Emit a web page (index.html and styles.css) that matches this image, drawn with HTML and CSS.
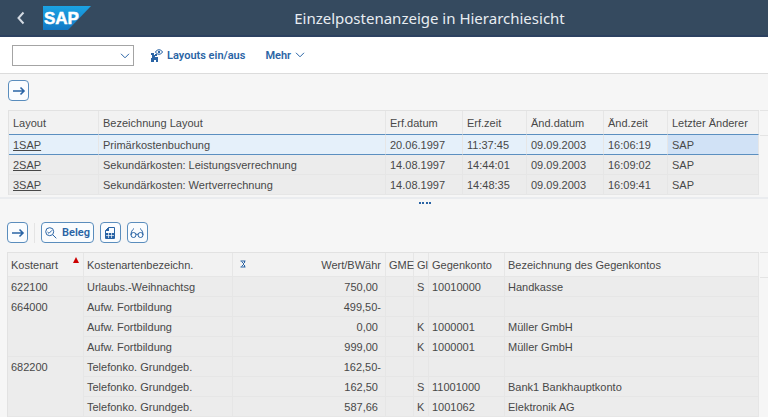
FILE: index.html
```html
<!DOCTYPE html>
<html lang="de">
<head>
  <meta charset="UTF-8">
  <meta name="viewport" content="width=device-width, initial-scale=1.0">
  <title>Einzelpostenanzeige in Hierarchiesicht</title>
  <link rel="stylesheet" href="styles.css">
</head>
<body>
  <header class="shell">
    <button class="back" aria-label="Zurück">
      <svg width="8" height="14" viewBox="0 0 8 14"><path d="M6.500 1.500L1.500 7l5 5.500"/></svg>
    </button>
    <svg class="logo" width="48" height="24" viewBox="0 0 48 24" role="img" aria-label="SAP">
      <defs>
        <linearGradient id="sap" x1="0" y1="0" x2="0" y2="1">
          <stop offset="0" stop-color="#1ba3e4"/>
          <stop offset="1" stop-color="#1278c4"/>
        </linearGradient>
      </defs>
      <path d="M0 0h48L25 24H0z" fill="url(#sap)" stroke="none"/>
      <text x="1" y="18">SAP</text>
    </svg>
    <h1>Einzelpostenanzeige in Hierarchiesicht</h1>
  </header>

  <nav class="toolbar">
    <div class="select-box">
      <select aria-label="Befehl"><option></option></select>
      <svg class="chevron" width="10" height="6" viewBox="0 0 10 6"><path d="M1 .8l4 4 4-4"/></svg>
    </div>
    <button class="btn-text">
      <svg width="13" height="13" viewBox="0 0 13 13">
        <path class="fill" d="M1 4h3v2h1v2h3v5H6v-2H4v2H1V9h1V6H1z"/>
        <path class="fill" d="M5 5h2v2H5z"/>
        <path d="M5.500 3c1.500-3 5.500-3 7 0-1.500 3-5.500 3-7 0z"/>
        <circle class="fill" cx="9" cy="3" r="1.200"/>
      </svg>
      Layouts ein/aus
    </button>
    <button class="btn-text">
      Mehr
      <svg class="chevron" width="10" height="6" viewBox="0 0 10 6"><path d="M1 .8l4 4 4-4"/></svg>
    </button>
  </nav>

  <main>
    <section class="panel">
      <div class="actions">
        <button class="btn" aria-label="Weiter">
          <svg width="14" height="12" viewBox="0 0 14 12"><path class="thick" d="M1 6h11M8.500 2.500L12 6 8.500 9.500"/></svg>
        </button>
      </div>
      <div class="grid-wrap">
        <table class="grid layouts">
          <colgroup>
            <col class="w-layout"><col><col class="w-date"><col class="w-time"><col class="w-date"><col class="w-time"><col class="w-user">
          </colgroup>
          <thead>
            <tr><th>Layout</th><th>Bezeichnung Layout</th><th>Erf.datum</th><th>Erf.zeit</th><th>Änd.datum</th><th>Änd.zeit</th><th>Letzter Änderer</th></tr>
          </thead>
          <tbody>
            <tr class="selected"><td><a href="#">1SAP</a></td><td>Primärkostenbuchung</td><td>20.06.1997</td><td>11:37:45</td><td>09.09.2003</td><td>16:06:19</td><td class="current">SAP</td></tr>
            <tr><td><a href="#">2SAP</a></td><td>Sekundärkosten: Leistungsverrechnung</td><td>14.08.1997</td><td>14:44:01</td><td>09.09.2003</td><td>16:09:02</td><td>SAP</td></tr>
            <tr><td><a href="#">3SAP</a></td><td>Sekundärkosten: Wertverrechnung</td><td>14.08.1997</td><td>14:48:35</td><td>09.09.2003</td><td>16:09:41</td><td>SAP</td></tr>
          </tbody>
        </table>
        <div class="rail"></div>
      </div>
    </section>

    <div class="splitter"><svg width="14" height="4" viewBox="0 0 14 4"><path d="M1 1h2v2H1zM4 1h2v2H4zM8 1h2v2H8zM11 1h2v2h-2z"/></svg></div>

    <section class="panel panel-items">
      <div class="actions">
        <button class="btn" aria-label="Weiter">
          <svg width="14" height="12" viewBox="0 0 14 12"><path class="thick" d="M1 6h11M8.500 2.500L12 6 8.500 9.500"/></svg>
        </button>
        <span class="divider"></span>
        <button class="btn btn-label">
          <svg width="12" height="12" viewBox="0 0 12 12"><circle cx="4.700" cy="4.700" r="4"/><path d="M7.700 7.700l3.600 3.600M2.500 5l1.500 1.300 3-3"/></svg>
          Beleg
        </button>
        <button class="btn" aria-label="Layout">
          <svg width="12" height="14" viewBox="0 0 12 14"><path d="M4.500 1.500h6v11h-9v-8z"/><path class="fill" d="M1 5l4-4v4zM2 7h8v5H2z"/><path class="lines" d="M2 9.500h8M4.500 7v5M7.500 7v5"/></svg>
        </button>
        <button class="btn" aria-label="Anzeigen">
          <svg width="14" height="12" viewBox="0 0 14 12"><circle cx="3.500" cy="8" r="2.500"/><circle cx="10.500" cy="8" r="2.500"/><path d="M1 8c0-3 1-5 3-6.500M13 8c0-3-1-5-3-6.500M6 7.500q1-1 2 0"/></svg>
        </button>
      </div>
      <div class="grid-wrap">
        <table class="grid items">
          <colgroup>
            <col class="w-cost"><col class="w-name"><col class="w-value"><col class="w-unit"><col class="w-kind"><col class="w-account"><col>
          </colgroup>
          <thead>
            <tr>
              <th><div class="head">Kostenart <svg class="sort" width="6" height="6" viewBox="0 0 6 6"><path d="M3 0l3 6H0z"/></svg></div></th>
              <th>Kostenartenbezeichn.</th>
              <th><div class="head"><svg class="sum" width="6" height="8" viewBox="0 0 6 8"><path d="M.5 1h5M.5 7h5M1.500 1.500L4 4 1.500 6.500M4.500 1v2M4.500 5v2"/></svg> Wert/BWähr</div></th>
              <th>GME</th><th>Gl</th><th>Gegenkonto</th><th>Bezeichnung des Gegenkontos</th>
            </tr>
          </thead>
          <tbody>
            <tr><td>622100</td><td>Urlaubs.-Weihnachtsg</td><td class="num">750,00&nbsp;</td><td></td><td>S</td><td>10010000</td><td>Handkasse</td></tr>
            <tr><td rowspan="3" class="group">664000</td><td>Aufw. Fortbildung</td><td class="num">499,50-</td><td></td><td></td><td></td><td></td></tr>
            <tr><td>Aufw. Fortbildung</td><td class="num">0,00&nbsp;</td><td></td><td>K</td><td>1000001</td><td>Müller GmbH</td></tr>
            <tr><td>Aufw. Fortbildung</td><td class="num">999,00&nbsp;</td><td></td><td>K</td><td>1000001</td><td>Müller GmbH</td></tr>
            <tr><td rowspan="3" class="group">682200</td><td>Telefonko. Grundgeb.</td><td class="num">162,50-</td><td></td><td></td><td></td><td></td></tr>
            <tr><td>Telefonko. Grundgeb.</td><td class="num">162,50&nbsp;</td><td></td><td>S</td><td>11001000</td><td>Bank1 Bankhauptkonto</td></tr>
            <tr><td>Telefonko. Grundgeb.</td><td class="num">587,66&nbsp;</td><td></td><td>K</td><td>1001062</td><td>Elektronik AG</td></tr>
          </tbody>
        </table>
        <div class="rail"></div>
      </div>
    </section>
  </main>
</body>
</html>
```
FILE: styles.css
```css
* {
  box-sizing: border-box;
}

body {
  margin: 0;
  background-color: #f6f6f6;
  color: #484848;
  font-family: "Liberation Sans", Arial, sans-serif;
  font-size: 11px;
}

svg {
  display: block;
  fill: none;
  stroke: #2a64a5;
}

svg .fill {
  fill: #2a64a5;
  stroke: none;
}

svg .thick {
  stroke-width: 1.6;
}

svg .lines {
  stroke: #fafcfe;
  stroke-width: 0.7;
}

button {
  font-family: Roboto, sans-serif;
  font-size: 11px;
  font-weight: 600;
  color: #2a64a5;
  cursor: pointer;
}

.shell {
  display: flex;
  align-items: center;
  height: 37px;
  padding-left: 13px;
  background-color: #354a5f;
  border-bottom: 2px solid #2c4160;
}

.shell h1 {
  flex: 1;
  margin: 0;
  color: #e8edf2;
  font-family: "Noto Sans", sans-serif;
  font-size: 15px;
  font-weight: 400;
  text-align: center;
}

.back {
  margin-right: 14px;
  padding: 2px 4px;
  border: none;
  background: none;
}

.back svg {
  stroke: #d3dae2;
  stroke-width: 2;
}

.logo text {
  fill: #fff;
  stroke: #fff;
  stroke-width: 0.5;
  font-family: "Liberation Sans", Arial, sans-serif;
  font-size: 17px;
  font-weight: 700;
}

.toolbar {
  display: flex;
  align-items: center;
  gap: 16px;
  height: 37px;
  padding: 0 12px;
  background-color: #fff;
  border-bottom: 1px solid #dcdcdc;
}

.select-box {
  position: relative;
}

.select-box select {
  display: block;
  width: 122px;
  height: 21px;
  appearance: none;
  background-color: #fff;
  border: 1px solid #a4a4a4;
  border-radius: 0;
}

.select-box .chevron {
  position: absolute;
  top: 8px;
  right: 4px;
  pointer-events: none;
}

.btn-text {
  display: flex;
  align-items: center;
  gap: 4px;
  margin-right: 4px;
  padding: 0;
  border: none;
  background: none;
}

.panel {
  padding-left: 8px;
}

.panel-items {
  padding-left: 7px;
}

.actions {
  display: flex;
  align-items: center;
  gap: 6px;
  padding: 6px 0 9px;
}

.btn {
  display: flex;
  align-items: center;
  justify-content: center;
  gap: 5px;
  width: 21px;
  height: 21px;
  padding: 0;
  background-color: #fafcfe;
  border: 1px solid #5a8dbd;
  border-radius: 4px;
}

.btn-label {
  width: auto;
  padding: 0 3px;
}

.divider {
  width: 1px;
  height: 20px;
  background-color: #e4e4e4;
}

.grid-wrap {
  display: flex;
  gap: 1px;
}

.rail {
  width: 8px;
  border-top: 1px solid #e4e4e4;
  background: linear-gradient(#e4e4e4, #e4e4e4) 0 24px / 100% 1px no-repeat;
}

.grid {
  flex: 1;
  table-layout: fixed;
  width: 100%;
  border-spacing: 0;
  border-top: 1px solid #e2e2e2;
  border-left: 1px solid #e2e2e2;
}

.grid th,
.grid td {
  height: 20px;
  padding: 0 4px;
  line-height: 16px;
  text-align: left;
  white-space: nowrap;
  font-weight: 400;
  background-color: #ececec;
  border-right: 1px solid #e6e6e6;
  border-bottom: 1px solid #e6e6e6;
}

.grid th {
  height: 24px;
  background-color: #f2f2f2;
}

.grid a {
  color: #484848;
}

.grid .selected td {
  background-color: #e5f0fa;
  border-bottom: 1px solid #5b8fc0;
}

.grid .selected .current {
  background-color: #d1e2f6;
}

.layouts th {
  border-bottom-color: #5b8fc0;
}

.items th,
.items td {
  padding-left: 3px;
}

.head {
  display: flex;
  justify-content: space-between;
}

.grid .num {
  text-align: right;
}

.grid .group {
  padding-top: 2px;
  vertical-align: top;
}

.sort {
  fill: #c00;
  stroke: none;
}

.sum {
  margin: 3px 4px;
}

.w-layout { width: 90px; }
.w-date { width: 77px; }
.w-time { width: 64px; }
.w-user { width: 91px; }
.w-cost { width: 76px; }
.w-name { width: 149px; }
.w-value { width: 153px; }
.w-unit { width: 28px; }
.w-kind { width: 15px; }
.w-account { width: 76px; }

.splitter {
  display: flex;
  justify-content: center;
  margin-top: 2px;
  height: 19px;
  padding: 2px 0 0 82px;
  border-top: 2px solid #eaecef;
}

.splitter svg {
  fill: #2a64a5;
  stroke: none;
}
```
